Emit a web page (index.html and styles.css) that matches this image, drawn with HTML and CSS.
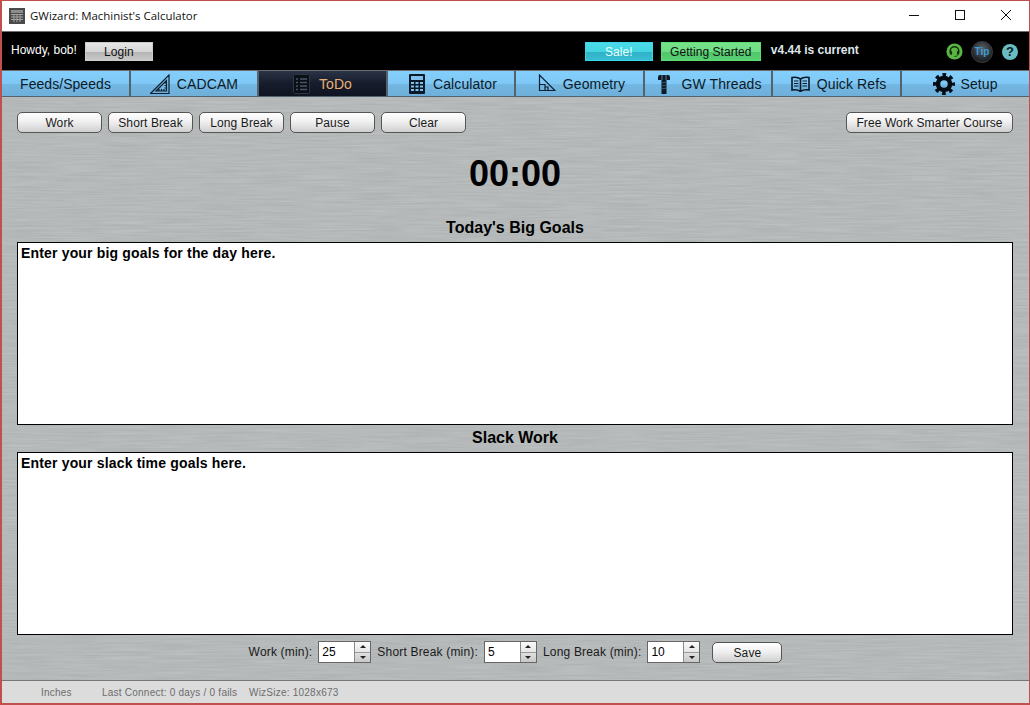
FILE: index.html
```html
<!DOCTYPE html>
<html lang="en">

<head>
    <meta charset="UTF-8" />
    <title>GWizard: Machinist's Calculator</title>
    <link rel="stylesheet" href="styles.css">
</head>

<body>
    <div class="window">
        <div class="titlebar">
            <svg class="app-icon" width="16" height="16" viewBox="0 0 16 16">
                <rect width="16" height="16" fill="#4a4a4a" />
                <rect x="2" y="2" width="12" height="3" fill="#8c8c8c" />
                <path d="M2 6.500h12M2 9h12M2 11.500h12M5 6v8M8 6v8M11 6v8" stroke="#a4a4a4" fill="none" />
            </svg>
            <span class="app-title">GWizard: Machinist's Calculator</span>
            <div class="win-controls">
                <svg width="46" height="30" viewBox="0 0 46 30"><path d="M18 14.500h10" stroke="#111" /></svg>
                <svg width="46" height="30" viewBox="0 0 46 30"><rect x="18.500" y="9.500" width="9" height="9" stroke="#111" fill="none" /></svg>
                <svg width="46" height="30" viewBox="0 0 46 30"><path d="M18 9l10 10M28 9l-10 10" stroke="#111" fill="none" /></svg>
            </div>
        </div>

        <div class="topbar">
            <span class="howdy">Howdy, bob!</span>
            <button type="button" class="top-btn login">Login</button>
            <button type="button" class="top-btn sale">Sale!</button>
            <button type="button" class="top-btn started">Getting Started</button>
            <span class="version">v4.44 is current</span>
            <svg class="top-icon support" width="17" height="17" viewBox="0 0 18 18">
                <circle cx="9" cy="9" r="8.500" fill="#5cb645" />
                <path d="M4.500 10V8.500a4.500 4.500 0 0 1 9 0V10" fill="none" stroke="#10300c" stroke-width="1.600" />
                <rect x="4" y="8.500" width="2.500" height="4" rx="1" fill="#10300c" />
                <rect x="11.500" y="8.500" width="2.500" height="4" rx="1" fill="#10300c" />
                <path d="M12.500 12.500q-1 1.800-3.500 1.800" fill="none" stroke="#10300c" />
            </svg>
            <span class="tip">Tip</span>
            <span class="help">?</span>
        </div>

        <nav class="tabs">
            <a class="tab">Feeds/Speeds</a>
            <a class="tab cadcam">
                <svg width="20" height="20" viewBox="0 0 20 20">
                    <path d="M.500 19.500L19 1v18.500zM6 17h10.500V6.500zM16.500 17v-2M14 17v-2M11.500 17v-2M9 17v-2M16.500 14h-2M16.500 11.500h-2M16.500 9h-2" fill="none" stroke="#0d1f30" stroke-width="1.200" />
                </svg>
                CADCAM
            </a>
            <a class="tab active">
                <svg class="icon-todo" width="17" height="20" viewBox="0 0 17 20">
                    <rect x=".5" y=".5" width="16" height="19" rx="1" fill="#0b0f18" stroke="#2d3644" />
                    <path d="M3 5h2M7 5h7M3 8.500h2M7 8.500h7M3 12h2M7 12h7M3 15.500h2M7 15.500h7" stroke="#4a5566" stroke-width="1.300" />
                </svg>
                ToDo
            </a>
            <a class="tab shift">
                <svg class="icon-calc" width="16" height="20" viewBox="0 0 16 20">
                    <rect width="16" height="20" rx="1" fill="#0b1a28" />
                    <rect x="2" y="2" width="12" height="4" fill="#7fc0ec" />
                    <path d="M2 8h3v2H2zM6.500 8h3v2h-3zM11 8h3v2h-3zM2 11.500h3v2H2zM6.500 11.500h3v2h-3zM11 11.500h3v2h-3zM2 15h3v2H2zM6.500 15h3v2h-3zM11 15h3v2h-3z" fill="#7fc0ec" />
                </svg>
                Calculator
            </a>
            <a class="tab shift">
                <svg width="18" height="20" viewBox="0 0 18 20">
                    <path d="M1.500 1v15.500H17zM1.500 10.500h5.500v6M7 13h3v3.500" fill="none" stroke="#0d1f30" stroke-width="1.200" />
                </svg>
                Geometry
            </a>
            <a class="tab shift">
                <svg class="icon-screw" width="12" height="20" viewBox="0 0 12 20">
                    <path d="M2 1h8q2 0 2 2v3H8.500v14h-5V6H0V3q0-2 2-2z" fill="#0b1a28" />
                    <path d="M4 1v5M8 1v5" stroke="#56758f" />
                    <path d="M3.500 9l5-1M3.500 12l5-1M3.500 15l5-1" stroke="#3e5a72" />
                </svg>
                GW Threads
            </a>
            <a class="tab shift">
                <svg width="19" height="16" viewBox="0 0 19 16">
                    <path d="M9.500 3C7.500 1.500 4 1 1 1.500V14c3-.5 6.500 0 8.500 1.500C11.500 14 15 13.500 18 14V1.500C15 1 11.500 1.500 9.500 3zM9.500 3v12.500" fill="none" stroke="#0b1a28" stroke-width="1.600" />
                    <path d="M3 5h4.500M3 7.500h4.500M3 10h4.500M11.500 5H16M11.500 7.500H16M11.500 10H16" stroke="#0b1a28" />
                </svg>
                Quick Refs
            </a>
            <a class="tab">
                <svg class="icon-gear" width="22" height="22" viewBox="0 0 22 22">
                    <circle cx="11" cy="11" r="6" fill="none" stroke="#050b12" stroke-width="4.500" />
                    <circle cx="11" cy="11" r="9" fill="none" stroke="#050b12" stroke-width="4" stroke-dasharray="3.534 3.534" stroke-dashoffset="1.767" />
                </svg>
                Setup
            </a>
        </nav>

        <main class="content">
            <div class="actions">
                <button type="button" class="btn">Work</button>
                <button type="button" class="btn">Short Break</button>
                <button type="button" class="btn">Long Break</button>
                <button type="button" class="btn">Pause</button>
                <button type="button" class="btn">Clear</button>
                <button type="button" class="btn course">Free Work Smarter Course</button>
            </div>

            <div class="timer">00:00</div>

            <h2 class="goal-title first">Today's Big Goals</h2>
            <div class="goal-box">Enter your big goals for the day here.</div>

            <h2 class="goal-title">Slack Work</h2>
            <div class="goal-box">Enter your slack time goals here.</div>

            <div class="settings">
                <label>Work (min):</label>
                <div class="spinner">
                    <span class="spin-value">25</span>
                    <span class="spin-arrows"><i class="up"></i><i class="down"></i></span>
                </div>
                <label>Short Break (min):</label>
                <div class="spinner">
                    <span class="spin-value">5</span>
                    <span class="spin-arrows"><i class="up"></i><i class="down"></i></span>
                </div>
                <label>Long Break (min):</label>
                <div class="spinner">
                    <span class="spin-value">10</span>
                    <span class="spin-arrows"><i class="up"></i><i class="down"></i></span>
                </div>
                <button type="button" class="btn save">Save</button>
            </div>
        </main>

        <footer class="statusbar">
            <span class="units">Inches</span>
            <span class="connect">Last Connect: 0 days / 0 fails</span>
            <span>WizSize: 1028x673</span>
        </footer>
    </div>
</body>

</html>
```

FILE: styles.css
```css
* {
    box-sizing: border-box;
    margin: 0;
    padding: 0;
}

html,
body {
    height: 100%;
    overflow: hidden;
}

body {
    font-family: "Liberation Sans", Arial, sans-serif;
    font-size: 12px;
}

.window {
    background: #fff;
    border: 1px solid #c0504d;
    border-bottom-width: 2px;
    border-left-width: 2px;
    display: flex;
    flex-direction: column;
    height: 705px;
    width: 1030px;
}

/* window chrome */
.titlebar {
    align-items: center;
    border-bottom: 1px solid #6e6e6e;
    display: flex;
    flex: 0 0 31px;
    margin-left: -1px;
    padding-left: 8px;
}

.app-icon {
    margin-top: -1px;
}

.app-title {
    color: #111;
    font-family: "Open Sans", "Liberation Sans", sans-serif;
    font-size: 11.45px;
    margin-left: 5px;
    margin-top: -2px;
}

.win-controls {
    display: flex;
    margin-left: auto;
}

/* black bar */
.topbar {
    align-items: center;
    background: #000;
    display: flex;
    flex: 0 0 38px;
    padding-left: 9px;
}

.howdy {
    color: #fff;
    margin-right: 8px;
    margin-top: -2px;
}

.top-btn {
    border: 1px solid #999;
    color: #111;
    font-family: inherit;
    font-size: 12px;
    height: 19px;
    letter-spacing: 0.05px;
    margin-top: 1px;
    padding-top: 1px;
}

.login {
    background: linear-gradient(#e6e6e6, #d6d6d6 50%, #b4b4b4 52%, #c8c8c8);
    border-color: #ccc;
    width: 68px;
}

.sale {
    background: linear-gradient(#4bdbe8, #45d5e2 50%, #2fb2c8 52%, #38bcd2);
    border-color: #3ad7ea;
    color: #eaffff;
    margin-left: 432px;
    width: 68px;
}

.started {
    background: linear-gradient(#77e38b, #6edd84 50%, #4fc66a 52%, #58cf72);
    border-color: #5ae070;
    margin-left: 8px;
    width: 100px;
}

.version {
    color: #dfe6ea;
    font-weight: 700;
    margin-left: 10px;
    margin-top: -2px;
}

.top-icon {
    flex: none;
}

.support {
    margin-left: 87px;
    margin-top: 1px;
}

.tip {
    background: radial-gradient(circle at 50% 35%, #5b6468, #1c2226 70%);
    border: 1px solid #3c3c3c;
    border-radius: 50%;
    color: #3f9ad8;
    font-size: 10px;
    font-weight: 700;
    height: 22px;
    line-height: 20px;
    margin-left: 8px;
    margin-top: 1px;
    text-align: center;
    width: 22px;
}

.help {
    background: #68bcc2;
    border-radius: 50%;
    color: #0c2226;
    font-size: 13px;
    font-weight: 700;
    height: 16px;
    line-height: 16px;
    margin-left: 9px;
    margin-top: 1px;
    text-align: center;
    width: 16px;
}

/* tabs */
.tabs {
    border-top: 1px solid #6c6c6c;
    display: grid;
    flex: 0 0 27px;
    grid-template-columns: 129px 128px 129px 128px 129px 128px 129px 1fr;
}

.tab {
    align-items: center;
    background: linear-gradient(#84cefb, #7fc8f6 50%, #72b6e2 55%, #6fb0da);
    border-bottom: 1px solid #55626c;
    border-right: 2px solid #55626c;
    color: #0c1a26;
    display: flex;
    font-size: 14px;
    gap: 7px;
    justify-content: center;
    letter-spacing: 0.1px;
}

.tab.shift {
    padding-left: 4px;
}

.tab:last-child {
    border-right: none;
}

.tab.active {
    background: linear-gradient(#2a3446, #161c2c 50%, #0f1422);
    color: #e8b070;
}

.tab.active,
.tab:first-child {
    letter-spacing: 0.05px;
}

.icon-todo {
    margin-right: 2px;
}

.icon-calc {
    margin-right: 1px;
}

.icon-screw {
    margin-right: 4px;
}

.icon-gear {
    margin-right: -2px;
}

/* brushed metal panel */
.content {
    background-color: #b5baba;
    background-image: url("data:image/svg+xml,%3Csvg xmlns='http://www.w3.org/2000/svg' width='1030' height='590'%3E%3Cfilter id='n' color-interpolation-filters='sRGB'%3E%3CfeTurbulence type='fractalNoise' baseFrequency='.02 .6' numOctaves='3' seed='4'/%3E%3CfeColorMatrix values='.08 0 0 0 .67 .08 0 0 0 .685 .08 0 0 0 .685 0 0 0 0 1'/%3E%3C/filter%3E%3Crect width='1030' height='590' filter='url(%23n)'/%3E%3C/svg%3E");
    border-bottom: 1px solid #777;
    display: flex;
    flex: 1;
    flex-direction: column;
    padding: 15px 16px 0 15px;
}

.actions {
    display: flex;
    gap: 6px;
}

.btn {
    background: linear-gradient(#fff, #f0f0f0 45%, #cfcfcf);
    border: 1px solid #555;
    border-radius: 5px;
    color: #1a1a1a;
    font-family: inherit;
    font-size: 12px;
    height: 21px;
    letter-spacing: 0.1px;
    padding-top: 1px;
    width: 85px;
}

.course {
    margin-left: auto;
    width: 167px;
}

.timer {
    color: #000;
    font-size: 36px;
    font-weight: 700;
    line-height: 42px;
    margin-top: 20px;
    text-align: center;
}

.goal-title {
    color: #000;
    font-size: 16px;
    line-height: 18px;
    margin-bottom: 5px;
    margin-top: 4px;
    text-align: center;
}

.goal-title.first {
    margin-top: 24px;
}

.goal-box {
    background: #fff;
    border: 1px solid #000;
    color: #000;
    flex: 0 0 183px;
    font-size: 14px;
    font-weight: 700;
    letter-spacing: 0.17px;
    padding: 2px 3px;
}

/* timer settings row */
.settings {
    align-items: center;
    display: flex;
    justify-content: center;
    margin-top: 6px;
    padding-left: 1px;
}

.settings label {
    color: #1a1a1a;
    letter-spacing: 0.18px;
    margin-right: 6px;
}

.spinner {
    background: #fff;
    border: 1px solid #666;
    display: flex;
    height: 22px;
    margin-right: 6px;
    width: 53px;
}

.spin-value {
    flex: 1;
    font-size: 12px;
    line-height: 21px;
    padding-left: 3px;
}

.spin-arrows {
    border-left: 1px solid #888;
    display: flex;
    flex: 0 0 16px;
    flex-direction: column;
}

.spin-arrows i {
    align-items: center;
    display: flex;
    flex: 1;
    justify-content: center;
}

.spin-arrows .up {
    background: linear-gradient(#fafafa, #e6e6e6);
    border-bottom: 1px solid #999;
}

.spin-arrows .down {
    background: linear-gradient(#e0e0e0, #c8c8c8);
}

.up::before {
    border-bottom: 3px solid #222;
    border-left: 3px solid transparent;
    border-right: 3px solid transparent;
    content: "";
}

.down::before {
    border-left: 3px solid transparent;
    border-right: 3px solid transparent;
    border-top: 3px solid #222;
    content: "";
}

.save {
    margin-left: 6px;
    width: 70px;
}

/* status */
.statusbar {
    align-items: center;
    background: #dcdcdc;
    color: #6c6c6c;
    display: flex;
    flex: 0 0 22px;
    font-size: 10px;
    letter-spacing: 0.23px;
    padding-left: 39px;
}

.units {
    width: 61px;
}

.connect {
    width: 147px;
}
```
